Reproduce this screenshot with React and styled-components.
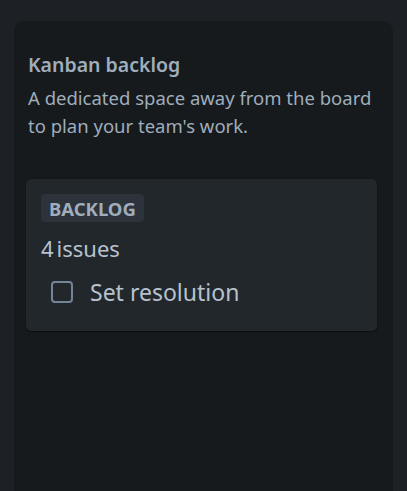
import React from "react";
import styled, { createGlobalStyle } from "styled-components";

const Global = createGlobalStyle`
  html, body { margin: 0; padding: 0; background: #1d2125; }
  body { font-family: "Noto Sans", "Segoe UI", sans-serif; height: 491px; overflow: hidden; }
  #root { height: 100%; }
`;

const Page = styled.div`
  height: 100%;
  box-sizing: border-box;
  padding: 21px 14px 0 14px;
  display: flex;
  flex-direction: column;
`;

const Panel = styled.section`
  flex: 1;
  background: #161a1d;
  border-radius: 10px 10px 0 0;
  padding: 31px 16px 0 12px;
  display: flex;
  flex-direction: column;
`;

const Header = styled.div`
  padding: 0 0 0 2px;
  margin-bottom: 39px;
`;

const Title = styled.h2`
  margin: 0 0 6px;
  font-size: 19.5px;
  font-weight: 600;
  line-height: 26px;
  color: #9fadbc;
`;

const Description = styled.p`
  margin: 0;
  font-size: 18.5px;
  line-height: 28px;
  color: #9fadbc;
`;

const Card = styled.div`
  background: #22272b;
  border-radius: 5px;
  box-shadow: 0 1px 1px rgba(0, 0, 0, 0.5), 0 0 1px rgba(0, 0, 0, 0.5);
  padding: 15px 15px 24px 15px;
  display: flex;
  flex-direction: column;
  align-items: flex-start;
`;

const Lozenge = styled.span`
  display: inline-flex;
  align-items: center;
  height: 28px;
  padding: 0 8px;
  border-radius: 4px;
  background: #2c333a;
  color: #9fadbc;
  font-size: 18.5px;
  font-weight: 700;
  text-transform: uppercase;
`;

const Count = styled.div`
  margin-top: 12px;
  font-size: 22px;
  line-height: 28px;
  color: #b6c2cf;
  display: flex;
  gap: 3px;
`;

const Row = styled.label`
  margin-top: 15px;
  margin-left: 10px;
  display: flex;
  align-items: center;
  gap: 17px;
  font-size: 23px;
  line-height: 30px;
  color: #b6c2cf;
`;

const Box = styled.span`
  width: 22px;
  height: 22px;
  box-sizing: border-box;
  border: 2px solid #738496;
  border-radius: 4px;
`;

export default function App() {
  return (
    <>
      <Global />
      <Page>
        <Panel>
          <Header>
            <Title>Kanban backlog</Title>
            <Description>
              A dedicated space away from the board to plan your team's work.
            </Description>
          </Header>
          <Card>
            <Lozenge>Backlog</Lozenge>
            <Count>
              <span>4</span>
              <span>issues</span>
            </Count>
            <Row>
              <Box />
              <span>Set resolution</span>
            </Row>
          </Card>
        </Panel>
      </Page>
    </>
  );
}
